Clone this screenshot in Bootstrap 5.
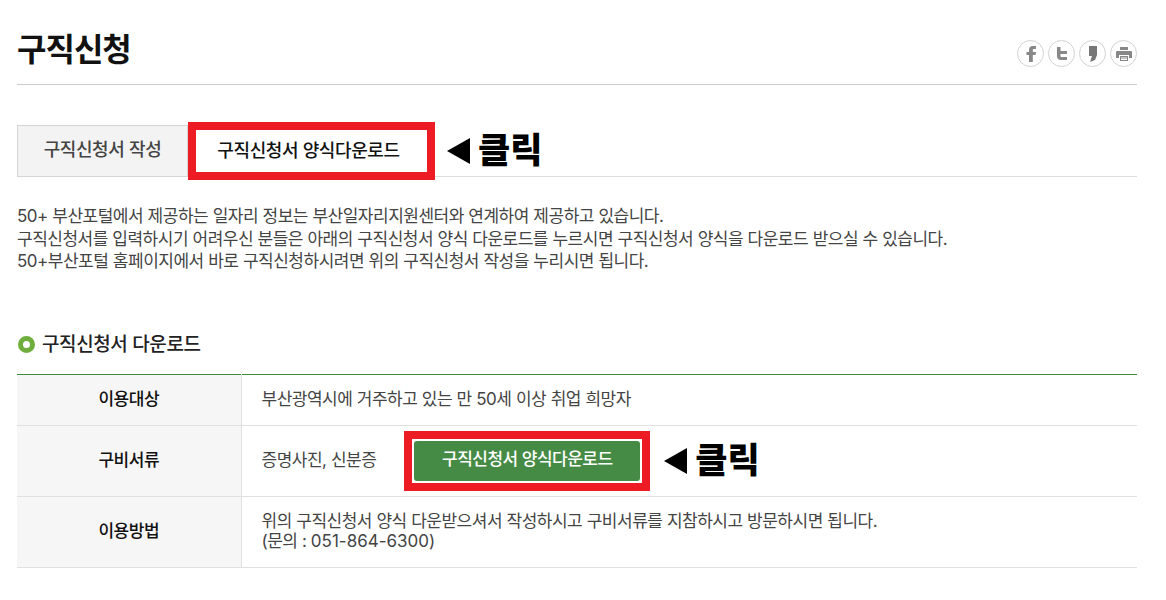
<!DOCTYPE html>
<html lang="ko">
<head>
  <title>구직신청</title>
  <link rel="stylesheet" href="https://cdn.jsdelivr.net/npm/bootstrap@5.3.0/dist/css/bootstrap.min.css">
  <style>
    body { font-family: "Inter", "Noto Sans CJK KR", sans-serif; color: #444; font-size: 17px; letter-spacing: -0.5px; word-spacing: 0.2px; }
    .page-wrap { width: 1120px; margin-left: 17px; }
    .title-bar { height: 85px; border-bottom: 1px solid #ccc; padding-top: 24px; }
    .title-bar h1 { font-size: 32px; font-weight: 700; color: #111; margin: 0; line-height: 52px; letter-spacing: -1px; }
    .share-btn { width: 27px; height: 27px; border: 1px solid #d2d2d2; border-radius: 50%; display: flex; align-items: center; justify-content: center; }
    .share-row { gap: 4px; }
    .tab-row { margin-top: 37px; height: 55px; border-bottom: 1px solid #ddd; }
    .tab-off { width: 171px; height: 52px; margin-top: 3px; background: #f3f3f3; border: 1px solid #d5d5d5; color: #444; font-size: 18px; font-weight: 500; line-height: 48px; text-align: center; letter-spacing: -0.4px; }
    .tab-on { width: 247px; height: 58px; border: 8px solid #ed1c24; background: #fff; color: #111; font-size: 18px; font-weight: 500; line-height: 41px; text-align: center; letter-spacing: -0.4px; padding-right: 6px; }
    .click-note { color: #000; font-size: 35px; font-weight: 900; line-height: 48px; letter-spacing: 0; margin-top: -2px; }
    .click-tri { width: 0; height: 0; border-style: solid; border-width: 13px 23px 13px 0; border-color: transparent #000 transparent transparent; }
    .tab-note { margin-left: 12px; height: 58px; gap: 8px; }
    .intro-text { margin-top: 28px; line-height: 22.5px; }
    .intro-text p { margin: 0; }
    .sub-head { margin-top: 42px; height: 59px; padding-top: 2px; color: #222; font-size: 19px; font-weight: 500; gap: 7px; letter-spacing: -0.4px; }
    .sub-dot { width: 17px; height: 17px; border: 5px solid #6fae3c; border-radius: 50%; margin-left: 1px; margin-top: -2px; }
    .info-table { width: 100%; border-collapse: collapse; border-top: 1px solid #3f8b3f; margin: 0; }
    .info-table th { width: 224px; background: #f6f6f6; border-right: 1px solid #e0e0e0; color: #111; font-size: 17px; font-weight: 500; text-align: center; vertical-align: middle; }
    .info-table td { padding: 0 0 0 20px; vertical-align: middle; }
    .info-table tr { border-bottom: 1px solid #e0e0e0; }
    .row-short { height: 51px; }
    .row-tall { height: 71px; }
    .btn-frame { border: 8px solid #ed1c24; padding: 2px; width: 246px; height: 60px; margin-left: 28px; }
    .btn-form { background: #468b45; color: #fff; border-radius: 3px; width: 100%; height: 100%; font-size: 17px; font-weight: 500; padding: 0 0 2px; border: 0; letter-spacing: -0.5px; }
    .btn-form:hover { background: #468b45; color: #fff; }
    .btn-note { margin-left: 14px; gap: 8px; }
    .info-table td.contact-line { line-height: 20px; padding-bottom: 2px; }
    .phone-num { letter-spacing: 0; }
  </style>
</head>
<body>
  <div class="page-wrap">
    <div class="title-bar d-flex justify-content-between align-items-start">
      <h1>구직신청</h1>
      <div class="share-row d-flex mt-3">
        <a class="share-btn" href="#"><svg width="16" height="18" viewBox="0 0 16 18"><path d="M6 17V10H3.500V7H6V5c0-3 1.500-4 3.500-4H13v3h-2C10 4 9.800 4.500 9.800 5.300V7H13l-.5 3H9.800v7z" fill="#888"/></svg></a>
        <a class="share-btn" href="#"><svg width="16" height="16" viewBox="0 0 16 16"><path d="M3 1h3.500v4H13v3H6.500v2c0 .8.400 1 1 1H13v3H7c-2.500 0-4-1.500-4-4z" fill="#888"/></svg></a>
        <a class="share-btn" href="#"><svg width="16" height="18" viewBox="0 0 16 18"><path d="M4 1h8v9l-2 5-5 2 2-6H4z" fill="#777"/></svg></a>
        <a class="share-btn" href="#"><svg width="18" height="16" viewBox="0 0 18 16"><path d="M5 1h8v3H5zM2 5h14a1 1 0 0 1 1 1v6h-3V9H4v3H1V6a1 1 0 0 1 1-1zM5 10h8v5H5z" fill="#888"/><path d="M6 12h6M6 13.500h6" stroke="#fff"/></svg></a>
      </div>
    </div>

    <div class="tab-row d-flex align-items-start">
      <div class="tab-off">구직신청서 작성</div>
      <div class="tab-on">구직신청서 양식다운로드</div>
      <div class="tab-note d-flex align-items-center">
        <span class="click-tri"></span><span class="click-note">클릭</span>
      </div>
    </div>

    <div class="intro-text">
      <p>50+ 부산포털에서 제공하는 일자리 정보는 부산일자리지원센터와 연계하여 제공하고 있습니다.</p>
      <p>구직신청서를 입력하시기 어려우신 분들은 아래의 구직신청서 양식 다운로드를 누르시면 구직신청서 양식을 다운로드 받으실 수 있습니다.</p>
      <p>50+부산포털 홈페이지에서 바로 구직신청하시려면 위의 구직신청서 작성을 누리시면 됩니다.</p>
    </div>

    <div class="sub-head d-flex align-items-center">
      <span class="sub-dot"></span><span>구직신청서 다운로드</span>
    </div>

    <table class="info-table">
      <tr class="row-short">
        <th>이용대상</th>
        <td>부산광역시에 거주하고 있는 만 50세 이상 취업 희망자</td>
      </tr>
      <tr class="row-tall">
        <th>구비서류</th>
        <td>
          <div class="d-flex align-items-center">
            <span>증명사진, 신분증</span>
            <div class="btn-frame"><button class="btn btn-form">구직신청서 양식다운로드</button></div>
            <div class="btn-note d-flex align-items-center">
              <span class="click-tri"></span><span class="click-note">클릭</span>
            </div>
          </div>
        </td>
      </tr>
      <tr class="row-tall">
        <th>이용방법</th>
        <td class="contact-line">위의 구직신청서 양식 다운받으셔서 작성하시고 구비서류를 지참하시고 방문하시면 됩니다.<br>(문의 : <span class="phone-num">051-864-6300)</span></td>
      </tr>
    </table>
  </div>
  <script src="https://cdn.jsdelivr.net/npm/bootstrap@5.3.0/dist/js/bootstrap.bundle.min.js"></script>
</body>
</html>
